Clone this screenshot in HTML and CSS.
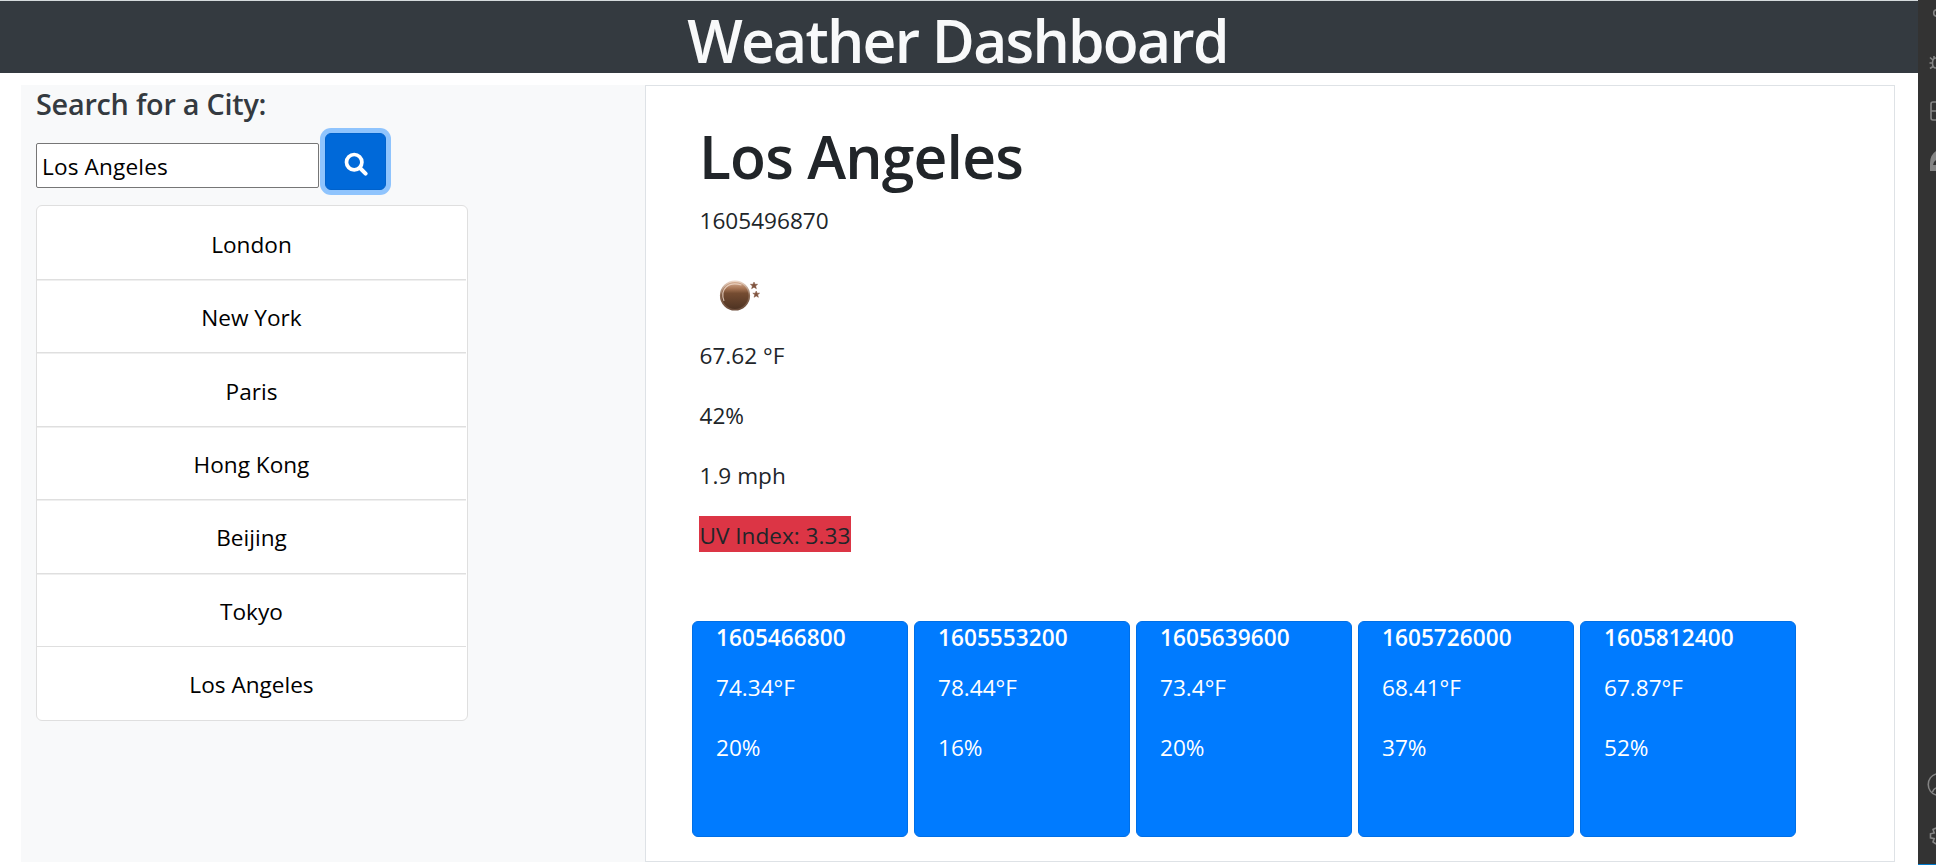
FILE: index.html
```html
<!DOCTYPE html>
<html lang="en">
<head>
<meta charset="utf-8">
<title>Weather Dashboard</title>
<link rel="stylesheet" href="styles.css">
</head>
<body>
<div class="page">
  <header class="header"><h1 class="title">Weather Dashboard</h1></header>
  <main class="columns">
    <aside class="search">
      <h2 class="search-title">Search for a City:</h2>
      <form class="search-form">
        <input class="search-input" type="text" value="Los Angeles">
        <button class="search-button" type="button" aria-label="Search">
          <svg class="search-icon" viewBox="0 0 24 24" fill="none" stroke="#fff"><circle cx="10.2" cy="10.2" r="7.7" stroke-width="3.7"/><path d="M16 16l5.6 5.6" stroke-width="4" stroke-linecap="round"/></svg>
        </button>
      </form>
      <ul class="cities">
        <li class="city"><span>London</span></li>
        <li class="city"><span>New York</span></li>
        <li class="city"><span>Paris</span></li>
        <li class="city"><span>Hong Kong</span></li>
        <li class="city"><span>Beijing</span></li>
        <li class="city"><span>Tokyo</span></li>
        <li class="city"><span>Los Angeles</span></li>
      </ul>
    </aside>
    <section class="weather">
      <div class="current">
        <h2 class="city-name">Los Angeles</h2>
        <p class="line">1605496870</p>
        <svg class="moon" viewBox="0 0 75 75">
          <defs>
            <linearGradient id="disc" x1="0" y1="0" x2="0" y2="1"><stop offset="0" stop-color="#dcb69c"/><stop offset=".25" stop-color="#a87656"/><stop offset=".42" stop-color="#754c31"/><stop offset="1" stop-color="#4c3222"/></linearGradient>
            <linearGradient id="rim" x1="0" y1="0" x2="0" y2="1"><stop offset="0" stop-color="#eed8c9"/><stop offset=".5" stop-color="#8b6a54"/><stop offset="1" stop-color="#6b4c3a"/></linearGradient>
          </defs>
          <circle cx="36" cy="34.5" r="14.3" fill="url(#disc)" stroke="url(#rim)" stroke-width="1.6"/>
          <path d="M25 40C20.500 28 29.500 20 42.500 24" fill="none" stroke="#f3dfd1" stroke-width="1.2" opacity=".75"/>
          <path fill="#80543f" stroke="#80543f" stroke-opacity=".5" d="M55 21l1 2.300h2.600l-2 1.700.8 2.700-2.400-1.500-2.400 1.500.8-2.700-2-1.700h2.600zM57.200 30l.9 2.200h2.500l-2 1.600.8 2.500-2.200-1.400-2.200 1.400.8-2.500-2-1.600h2.500z"/>
        </svg>
        <p class="line">67.62 °F</p>
        <p class="line">42%</p>
        <p class="line">1.9 mph</p>
        <p class="line uv">UV Index: 3.33</p>
      </div>
      <div class="forecast">
        <article class="card"><h3 class="card-date">1605466800</h3><p class="line">74.34°F</p><p class="line">20%</p></article>
        <article class="card"><h3 class="card-date">1605553200</h3><p class="line">78.44°F</p><p class="line">16%</p></article>
        <article class="card"><h3 class="card-date">1605639600</h3><p class="line">73.4°F</p><p class="line">20%</p></article>
        <article class="card"><h3 class="card-date">1605726000</h3><p class="line">68.41°F</p><p class="line">37%</p></article>
        <article class="card"><h3 class="card-date">1605812400</h3><p class="line">67.87°F</p><p class="line">52%</p></article>
      </div>
    </section>
  </main>
</div>
<nav class="activity">
  <svg class="activity-icons" viewBox="0 0 18 864" fill="none" stroke="#858585" stroke-width="1.6">
    <circle cx="19" cy="13" r="3.300"/>
    <path d="M18 58c-2.500 0-3.500 2-3.500 5s1 5 3.500 5M12 57.500l3 2.500M11.500 63h3M12 68.500l3-2M16 58v-2"/>
    <path d="M18 102h-3q-2 0-2 2v14q0 2 2 2h3M13 111h5"/>
    <path d="M12 171v-8q0-8 6-12v9q-3 2-3 5h3v6z" fill="#858585" stroke="none"/>
    <path d="M18 774a11 11 0 0 0 0 21M14.500 792q1-3 3.500-4"/>
    <path d="M18 828l-3 1.500 1.200 3.500-3.700.8v4l3.700.8-1.200 3.400 3 2"/>
  </svg>
</nav>
</body>
</html>
```
FILE: styles.css
```css
* { box-sizing: border-box; }
body {
  margin: 0;
  height: 865px;
  display: flex;
  overflow: hidden;
  background: #fff;
  color: #212529;
  font-family: "Open Sans", "Noto Sans", sans-serif;
  font-size: 22.6px;
}
h1, h2, h3, p, ul { margin: 0; padding: 0; }
.page { width: 1918px; border-top: 1px solid #d5dadc; }
.header { height: 72px; background: #343a40; text-align: center; }
.title {
  color: #f8f9fa;
  font-size: 58.8px;
  font-weight: 600;
  line-height: 78px;
  height: 72px;
  padding-right: 3px;
  letter-spacing: -1.75px;
}
.columns { display: flex; height: 777px; margin: 12px 23px 0 21px; }
.search { width: 624px; padding-left: 15px; background: #f8f9fa; }
.search-title {
  color: #343a40;
  font-size: 28.8px;
  font-weight: 600;
  line-height: 38px;
  height: 38px;
  letter-spacing: -0.25px;
}
.search-form { display: flex; margin-top: 10px; }
.search-input {
  width: 283px;
  height: 45px;
  margin-top: 10px;
  padding: 2px 4px 0 5px;
  border: 1px solid #767676;
  border-radius: 2px;
  color: #000;
  font: inherit;
  letter-spacing: 0.15px;
}
.search-button {
  width: 61px;
  height: 57px;
  margin-left: 6px;
  padding: 7px 0 0;
  border: 1px solid #0062cc;
  border-radius: 6px;
  background: #0069d9;
  box-shadow: 0 0 0 5px #8fc4fd;
}
.search-icon { width: 24px; height: 24px; }
.cities {
  width: 432px;
  height: 516px;
  margin-top: 15px;
  display: grid;
  grid-template-rows: 74px repeat(5, 73.4px) 1fr;
  list-style: none;
  background: #fff;
  border: 1px solid #dfdfdf;
  border-radius: 6px;
  color: #000;
}
.city {
  display: flex;
  align-items: center;
  justify-content: center;
  padding-top: 3px;
  margin-right: 1px;
  border-bottom: 1px solid #dfdfdf;
  box-shadow: 0 1px 0 #efefef;
}
.city:nth-last-child(2) { box-shadow: none; }
.city:last-child { border-bottom: 0; box-shadow: none; }
.weather {
  flex: 1;
  padding: 31px 46px 0;
  border: 1px solid #dee2e6;
}
.current { padding-left: 7px; height: 504px; }
.city-name {
  height: 84px;
  font-size: 58.8px;
  font-weight: 600;
  line-height: 78px;
  letter-spacing: -0.85px;
}
.line { height: 36px; padding-top: 3px; line-height: 34px; margin-bottom: 24px; }
.current .line { text-indent: 0.5px; }
.moon { display: block; width: 75px; height: 75px; }
.uv { width: 152px; background: #dc3545; white-space: nowrap; }
.forecast { display: flex; gap: 6px; }
.card {
  width: 216px;
  height: 216px;
  padding-left: 23px;
  border: 1px solid #006fe6;
  border-radius: 6px;
  background: #007bff;
  color: #fff;
}
.card-date { height: 46px; font-size: 22.6px; font-weight: 600; line-height: 32px; letter-spacing: 0.05px; }
.activity { width: 18px; background: #333; border-bottom: 1px solid #007acc; }
.activity-icons { display: block; width: 18px; height: 864px; }
```
